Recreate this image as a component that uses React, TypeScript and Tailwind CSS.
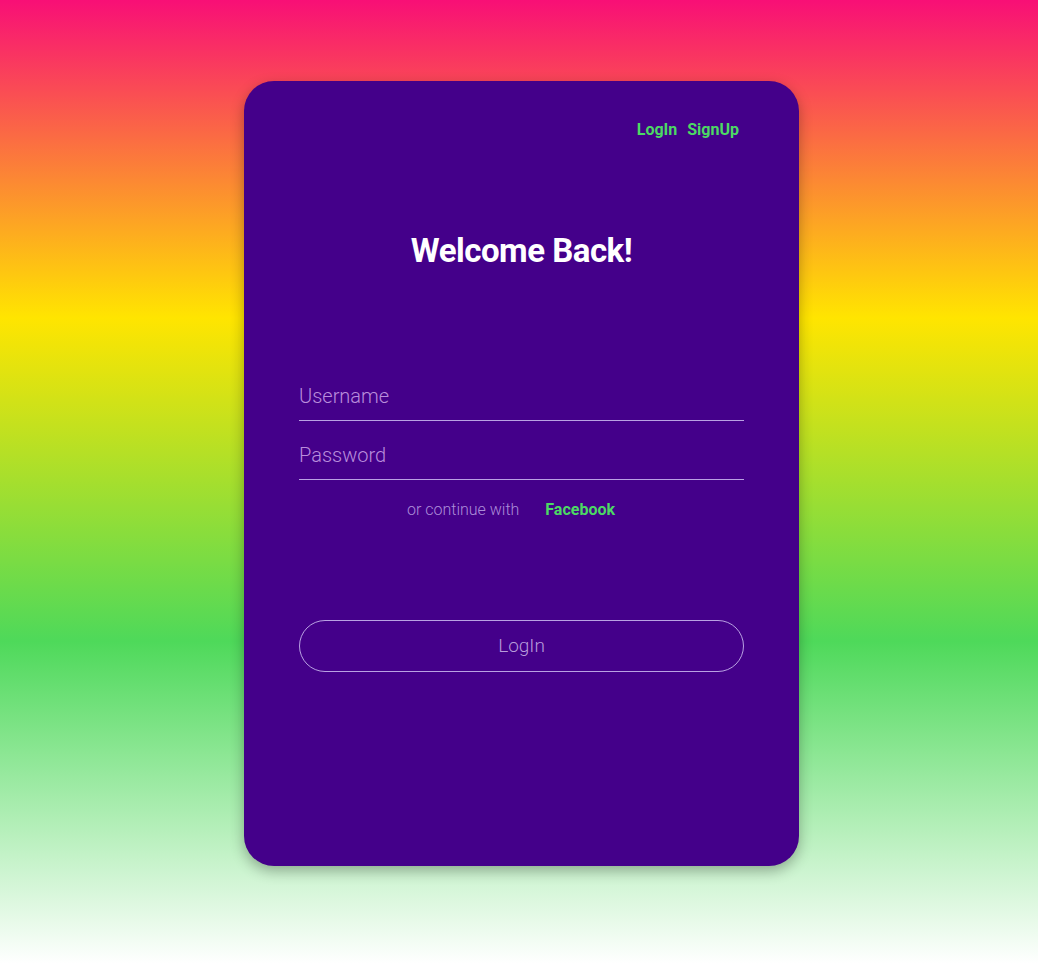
import React from 'react';

const App: React.FC = () => {
  return (
    <div
      className="min-h-screen w-full flex justify-center pl-[5px] pt-[81px] bg-[linear-gradient(to_bottom,#f80f76_0%,#ffe500_33%,#4ed95a_66.5%,#ffffff_100%)]"
      style={{ fontFamily: 'Roboto, "Noto Sans", sans-serif' }}
    >
      <div className="w-[555px] h-[785px] rounded-[30px] bg-[#44008a] shadow-[0_5px_14px_rgba(0,0,0,0.3)] flex flex-col px-[55px]">
        {/* Top nav */}
        <div className="flex justify-end gap-[10px] pt-[39px] pr-[5px] text-[16px] leading-[20px] font-bold text-[#4cd964]">
          <a href="#">LogIn</a>
          <a href="#">SignUp</a>
        </div>

        <h1 className="mt-[91px] text-center text-[33px] leading-[40px] font-bold text-white tracking-[-0.5px]">
          Welcome Back!
        </h1>

        <form className="flex flex-col mt-[99px]" onSubmit={(e) => e.preventDefault()}>
          <input
            type="text"
            placeholder="Username"
            className="h-[51px] w-full bg-transparent border-b border-[#b9a2e3] pt-[2px] text-[20px] font-light text-[#c7a8e6] placeholder-[#b98ddc] outline-none"
          />
          <input
            type="password"
            placeholder="Password"
            className="mt-[8px] h-[51px] w-full bg-transparent border-b border-[#b9a2e3] pt-[2px] text-[20px] font-light text-[#c7a8e6] placeholder-[#b98ddc] outline-none"
          />

          <div className="mt-[20px] flex justify-center items-center gap-[26px] pr-[21px] text-[16px] leading-[20px]">
            <span className="font-light text-[#ac8cd9]">or continue with</span>
            <a href="#" className="font-bold text-[#4cd964]">Facebook</a>
          </div>

          <button
            type="submit"
            className="mt-[100px] h-[52px] w-full rounded-full border border-[#b9a2e3] bg-transparent text-[19px] font-light text-[#b79cdb]"
          >
            LogIn
          </button>
        </form>
      </div>
    </div>
  );
};

export default App;
